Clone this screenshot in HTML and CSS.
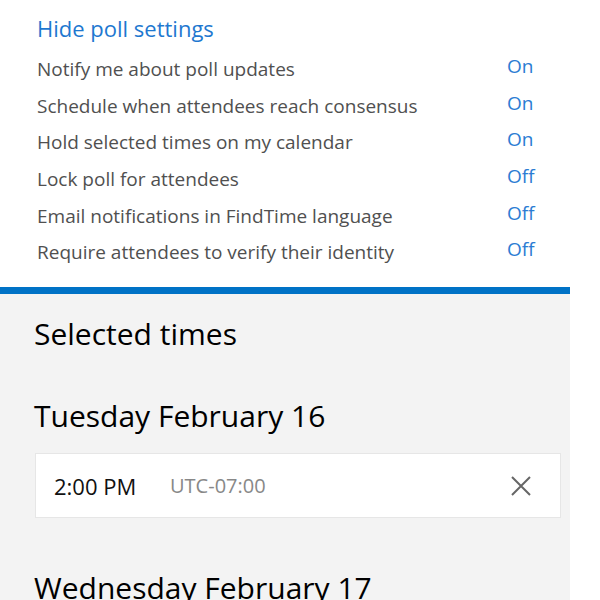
FILE: index.html
```html
<!DOCTYPE html>
<html lang="en">
<head>
    <meta charset="UTF-8">
    <title>Poll settings</title>
    <link rel="stylesheet" href="styles.css">
</head>
<body>
    <div class="settings">
        <a href="#" class="toggle-link">Hide poll settings</a>
        <div class="setting"><span class="label">Notify me about poll updates</span><span class="value">On</span></div>
        <div class="setting"><span class="label">Schedule when attendees reach consensus</span><span class="value">On</span></div>
        <div class="setting"><span class="label">Hold selected times on my calendar</span><span class="value">On</span></div>
        <div class="setting"><span class="label">Lock poll for attendees</span><span class="value">Off</span></div>
        <div class="setting"><span class="label">Email notifications in FindTime language</span><span class="value">Off</span></div>
        <div class="setting"><span class="label">Require attendees to verify their identity</span><span class="value">Off</span></div>
    </div>
    <div class="selected">
        <h2>Selected times</h2>
        <h3>Tuesday February 16</h3>
        <div class="slot">
            <span class="time">2:00 PM</span>
            <span class="zone">UTC-07:00</span>
            <button class="remove" aria-label="Remove">
                <svg width="20" height="20" viewBox="0 0 20 20"><path d="M1 1L19 19M19 1L1 19" stroke="#666" stroke-width="2" fill="none"/></svg>
            </button>
        </div>
        <h3 class="next-day">Wednesday February 17</h3>
    </div>
</body>
</html>
```

FILE: styles.css
```css
body {
    margin: 0;
    padding: 0;
    font-family: 'Open Sans', 'Noto Sans', sans-serif;
    background: #fff;
    width: 570px;
}
.settings {
    padding: 13px 0 16px 37px;
}
.toggle-link {
    display: block;
    color: #1e78d0;
    font-size: 22px;
    line-height: 30px;
    text-decoration: none;
    margin-bottom: 8px;
}
.setting {
    display: grid;
    grid-template-columns: 470px auto;
    height: 36.7px;
    line-height: 36.7px;
    font-size: 19px;
}
.label {
    color: #505050;
}
.value {
    color: #2b7cd3;
    margin-top: -3px;
}
.selected {
    border-top: 7px solid #0072c6;
    background: #f3f3f3;
    padding: 20px 9px 20px 34px;
    min-height: 400px;
}
h2, h3 {
    margin: 0;
    font-size: 30px;
    line-height: 40px;
    font-weight: normal;
    color: #000;
}
h3 {
    margin: 42px 0 17px;
}
h3.next-day {
    margin-top: 50px;
}
.slot {
    display: flex;
    align-items: center;
    background: #fff;
    border: 1px solid #e6e6e6;
    height: 63px;
    margin-left: 1px;
    padding: 0 20px 0 18px;
}
.time {
    font-size: 22px;
    color: #111;
    width: 116px;
}
.zone {
    font-size: 20px;
    color: #888;
    flex: 1;
}
.remove {
    border: none;
    background: none;
    padding: 0;
    margin-right: 9px;
    display: flex;
}
```
